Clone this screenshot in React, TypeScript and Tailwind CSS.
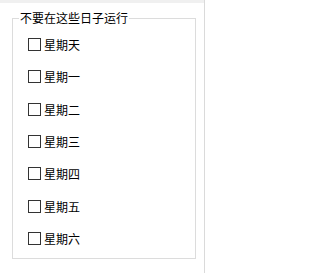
const days = ["星期天", "星期一", "星期二", "星期三", "星期四", "星期五", "星期六"];

const DayRow = ({ label }: { label: string }) => (
  <label className="flex items-center h-[13px] gap-[3px]">
    <span className="w-[13px] h-[13px] border border-[#333333] bg-white shrink-0" />
    <span className="text-[12px] leading-[13px] text-black">{label}</span>
  </label>
);

export default function App() {
  return (
    <div
      className="w-[206px] h-[273px] bg-white flex overflow-hidden"
      style={{ fontFamily: '"Noto Sans CJK SC", "Noto Sans", sans-serif' }}
    >
      <div className="w-[204px] flex flex-col">
        {/* top strip */}
        <div className="h-[3px] bg-[#f0f0f0]" />
        <div className="pl-[12px] pt-[7px]">
          <fieldset className="w-[184px] h-[249px] border border-[#dcdcdc] m-0 p-0 pl-[15px]">
            <legend className="ml-[-9px] px-[1px] text-[12px] leading-[16px] text-black">
              不要在这些日子运行
            </legend>
            <div className="flex flex-col justify-between h-[207px] mt-[12px]">
              {days.map((d) => (
                <DayRow key={d} label={d} />
              ))}
            </div>
          </fieldset>
        </div>
      </div>
      <div className="w-px bg-[#dadada]" />
    </div>
  );
}
